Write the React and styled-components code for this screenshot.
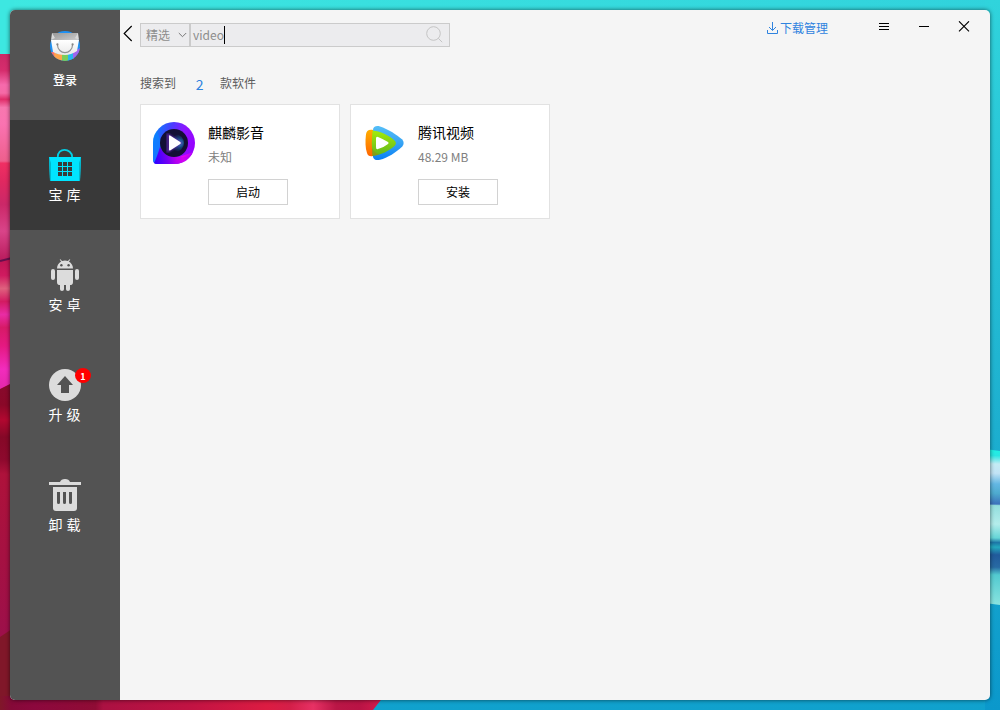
import React from "react";
import styled, { createGlobalStyle } from "styled-components";

const GlobalStyle = createGlobalStyle`
  * { box-sizing: border-box; }
  html, body { margin: 0; padding: 0; }
  body, button, input {
    font-family: "Noto Sans CJK SC", "Noto Sans", sans-serif;
    font-size: 12px;
  }
`;

const Desktop = styled.div`
  position: relative;
  width: 1000px;
  height: 710px;
  padding: 10px;
  overflow: hidden;
`;

const WallpaperSvg = styled.svg`
  position: absolute;
  inset: 0;
  z-index: 0;
`;

const Window = styled.div`
  display: flex;
  width: 980px;
  height: 690px;
  border-radius: 5px;
  overflow: hidden;
  background: #f5f5f5;
`;

const Shade = styled.div`
  position: relative;
  z-index: 1;
  border-radius: 5px;
  box-shadow: 0 0 4px rgba(0, 0, 0, 0.6);
`;

const Sidebar = styled.nav`
  display: flex;
  flex-direction: column;
  width: 110px;
  background: #535353;
`;

const NavItem = styled.div`
  display: flex;
  flex-direction: column;
  align-items: center;
  height: 110px;
  padding-top: ${(p) => (p.$account ? 20 : 28)}px;
  color: #fff;
  background: ${(p) => (p.$active ? "#393939" : "transparent")};
`;

const IconBox = styled.div`
  position: relative;
  display: flex;
  height: 34px;
  svg { display: block; }
`;

const NavLabel = styled.span`
  margin-top: ${(p) => (p.$account ? 6 : 2)}px;
  padding-right: ${(p) => (p.$account ? 0 : 1)}px;
  font-size: ${(p) => (p.$account ? 12 : 14)}px;
  font-weight: ${(p) => (p.$account ? 500 : 400)};
  line-height: 20px;
  white-space: pre;
  word-spacing: ${(p) => (p.$account ? 0 : 0.9)}px;
`;

const Badge = styled.span`
  position: absolute;
  left: 26px;
  top: 0;
  width: 16px;
  height: 15px;
  border-radius: 50%;
  background: #f00;
  color: #fff;
  font-size: 9px;
  font-weight: 700;
  line-height: 17px;
  text-align: center;
`;

const Main = styled.main`
  flex: 1;
  display: flex;
  flex-direction: column;
`;

const TopBar = styled.header`
  display: flex;
  align-items: flex-start;
  height: 53px;
`;

const IconButton = styled.button`
  display: flex;
  align-items: center;
  justify-content: center;
  width: ${(p) => p.$width}px;
  height: ${(p) => p.$height}px;
  margin: 0;
  padding: 0;
  border: 0;
  background: none;
`;

const BackButton = styled(IconButton)`
  justify-content: flex-start;
  padding-left: 3px;
  margin-top: 13px;
`;

const SearchBar = styled.div`
  display: flex;
  width: 310px;
  height: 24px;
  margin-top: 13px;
  border: 1px solid #cbcbcb;
  background: #ececee;
  color: #8c8c8c;
`;

const Category = styled.div`
  display: flex;
  align-items: center;
  justify-content: space-between;
  width: 49px;
  padding: 0 2px 0 5px;
  border-right: 1px solid #cbcbcb;
  line-height: 22px;
`;

const SearchField = styled.div`
  display: flex;
  align-items: center;
  flex: 1;
  padding: 0 6px 0 2px;
  border-left: 1px solid #cbcbcb;
  line-height: 22px;
  svg { margin: 0 0 1px auto; }
`;

const Caret = styled.span`
  width: 1px;
  height: 18px;
  background: #000;
`;

const WindowActions = styled.div`
  display: flex;
  margin-left: auto;
  padding-right: 6px;
`;

const DownloadLink = styled.a`
  display: flex;
  align-items: center;
  gap: 2px;
  height: 20px;
  margin: 8px 36px 0 0;
  color: #2f83df;
  line-height: 20px;
`;

const Results = styled.section`
  display: flex;
  flex-direction: column;
  padding: 0 20px;
`;

const Summary = styled.div`
  display: flex;
  align-items: flex-start;
  height: 41px;
  padding-top: 10px;
  color: #5c5c5c;
  line-height: 20px;
`;

const Count = styled.span`
  width: 44px;
  padding: 1px 0 0 3px;
  color: #2f83df;
  font-size: 14px;
  text-align: center;
`;

const CardGrid = styled.div`
  display: grid;
  grid-template-columns: repeat(4, 200px);
  gap: 10px;
`;

const Card = styled.article`
  display: flex;
  height: 115px;
  border: 1px solid #e2e2e2;
  background: #fff;
  padding: 17px 0 0 12px;
`;

const CardInfo = styled.div`
  display: flex;
  flex-direction: column;
  align-items: flex-start;
  margin-left: 13px;
`;

const AppName = styled.span`
  font-size: 14px;
  line-height: 20px;
  color: #000;
`;

const AppSize = styled.span`
  margin-top: 5px;
  line-height: 20px;
  color: #808080;
`;

const ActionButton = styled.button`
  width: 80px;
  height: 26px;
  margin-top: 12px;
  padding: 0;
  border: 1px solid #d2d2d2;
  background: #fff;
  color: #000;
  line-height: 24px;
`;

function Wallpaper() {
  return (
    <WallpaperSvg width="1000" height="710" viewBox="0 0 1000 710">
      <defs>
        <linearGradient id="sea" x1="0" y1="0" x2="0" y2="1">
          <stop offset="0" stopColor="#3be8e1" />
          <stop offset="0.6" stopColor="#1fb2cd" />
          <stop offset="1" stopColor="#10a1cd" />
        </linearGradient>
        <linearGradient id="sky" x1="0" y1="0" x2="1" y2="0">
          <stop offset="0" stopColor="#3ee8e1" />
          <stop offset="1" stopColor="#30d2dc" />
        </linearGradient>
        <linearGradient id="eastSea" x1="0" y1="0" x2="0" y2="1">
          <stop offset="0" stopColor="#30d4dc" />
          <stop offset="0.6" stopColor="#1dafcf" />
          <stop offset="1" stopColor="#0b98cb" />
        </linearGradient>
        <linearGradient id="petal" gradientUnits="userSpaceOnUse" x1="0" y1="54" x2="0" y2="260">
          <stop offset="0" stopColor="#ca2866" />
          <stop offset="0.08" stopColor="#d62d6d" />
          <stop offset="0.15" stopColor="#f66aac" />
          <stop offset="0.19" stopColor="#f56aa6" />
          <stop offset="0.22" stopColor="#e02d69" />
          <stop offset="0.26" stopColor="#f777af" />
          <stop offset="0.34" stopColor="#fa73b1" />
          <stop offset="0.52" stopColor="#ee5f8d" />
          <stop offset="0.53" stopColor="#f02f63" />
          <stop offset="0.62" stopColor="#e02860" />
          <stop offset="0.73" stopColor="#cb2868" />
          <stop offset="0.86" stopColor="#d94489" />
          <stop offset="1" stopColor="#b91c5d" />
        </linearGradient>
        <linearGradient id="bloom" gradientUnits="userSpaceOnUse" x1="0" y1="260" x2="3" y2="390">
          <stop offset="0" stopColor="#c01554" />
          <stop offset="0.12" stopColor="#d01b60" />
          <stop offset="0.22" stopColor="#df617e" />
          <stop offset="0.32" stopColor="#d31b62" />
          <stop offset="0.42" stopColor="#e92ca5" />
          <stop offset="0.52" stopColor="#d71a67" />
          <stop offset="0.66" stopColor="#e51981" />
          <stop offset="0.84" stopColor="#f22cbd" />
          <stop offset="1" stopColor="#e327a9" />
        </linearGradient>
        <linearGradient id="wine" gradientUnits="userSpaceOnUse" x1="0" y1="385" x2="-8" y2="632">
          <stop offset="0" stopColor="#870a2c" />
          <stop offset="0.08" stopColor="#8a0828" />
          <stop offset="0.14" stopColor="#b20830" />
          <stop offset="0.21" stopColor="#850827" />
          <stop offset="0.3" stopColor="#8d092d" />
          <stop offset="0.36" stopColor="#ae123b" />
          <stop offset="0.7" stopColor="#a51142" />
          <stop offset="1" stopColor="#9d104a" />
        </linearGradient>
        <linearGradient id="base" gradientUnits="userSpaceOnUse" x1="0" y1="0" x2="382" y2="0">
          <stop offset="0" stopColor="#801729" />
          <stop offset="0.03" stopColor="#850938" />
          <stop offset="0.09" stopColor="#8c083d" />
          <stop offset="0.25" stopColor="#900c35" />
          <stop offset="0.27" stopColor="#ab1142" />
          <stop offset="0.5" stopColor="#c21343" />
          <stop offset="0.7" stopColor="#dc1c42" />
          <stop offset="0.76" stopColor="#d41f49" />
          <stop offset="0.82" stopColor="#e73164" />
          <stop offset="0.88" stopColor="#ba1646" />
          <stop offset="0.94" stopColor="#b91345" />
          <stop offset="1" stopColor="#d41c4d" />
        </linearGradient>
        <linearGradient id="shell" gradientUnits="userSpaceOnUse" x1="990" y1="450" x2="987" y2="604">
          <stop offset="0" stopColor="#20f0e4" />
          <stop offset="0.035" stopColor="#29e7e3" />
          <stop offset="0.09" stopColor="#c4ebf4" />
          <stop offset="0.15" stopColor="#c2e3f5" />
          <stop offset="0.22" stopColor="#63b7e3" />
          <stop offset="0.28" stopColor="#4eabcf" />
          <stop offset="0.35" stopColor="#3d72bc" />
          <stop offset="0.36" stopColor="#93dedd" />
          <stop offset="0.48" stopColor="#b4edeb" />
          <stop offset="0.57" stopColor="#65d5d7" />
          <stop offset="0.6" stopColor="#1d76a6" />
          <stop offset="0.63" stopColor="#23a8be" />
          <stop offset="0.68" stopColor="#215a9b" />
          <stop offset="0.76" stopColor="#286aa3" />
          <stop offset="0.81" stopColor="#52cad0" />
          <stop offset="1" stopColor="#88e3df" />
        </linearGradient>
      </defs>
      <rect width="1000" height="710" fill="url(#sea)" />
      <rect width="1000" height="14" fill="url(#sky)" />
      <rect width="14" height="60" fill="#3de7e1" />
      <rect x="985" width="15" height="710" fill="url(#eastSea)" />
      <path d="M0 54H14V265H0Z" fill="url(#petal)" />
      <path d="M0 261L12 258V390H0Z" fill="url(#bloom)" />
      <path d="M0 261L12 258" stroke="#64104d" strokeWidth="2" />
      <path d="M0 389L12 383V640H0Z" fill="url(#wine)" />
      <path d="M0 637L12 629V700H0Z" fill="#801729" />
      <path d="M0 696H384L373 710H0Z" fill="url(#base)" />
      <path d="M985 449L1000 451V605L985 603Z" fill="url(#shell)" />
    </WallpaperSvg>
  );
}

function StoreLogo() {
  return (
    <svg width="30" height="34" viewBox="0 0 30 34">
      <defs>
        <clipPath id="disc"><circle cx="15" cy="16" r="15" /></clipPath>
        <linearGradient id="flap" x1="0" y1="0" x2="1" y2="1">
          <stop offset="0" stopColor="#989898" />
          <stop offset="1" stopColor="#cfcfcf" />
        </linearGradient>
        <linearGradient id="paper" x1="0" y1="0" x2="0" y2="1">
          <stop offset="0" stopColor="#fff" />
          <stop offset="1" stopColor="#e9e9e9" />
        </linearGradient>
      </defs>
      <circle cx="15" cy="16" r="15" fill="#1e91f4" />
      <g clipPath="url(#disc)">
        <path d="M0 22H6V32H0Z" fill="#fa6b6b" />
        <path d="M4 23L12 24V32H5Z" fill="#ffa54c" />
        <rect x="12" y="24" width="6" height="8" fill="#7ccd59" />
        <path d="M18 24L24 23V32H18Z" fill="#28b7ee" />
        <path d="M23 22L30 18V32H23Z" fill="#a064ed" />
      </g>
      <path d="M2 3H28V11H2Z" fill="url(#flap)" />
      <path d="M2 3L5 8L1 10ZM28 3L25 8L29 10Z" fill="#d9d9d9" />
      <path d="M1 10H29L27 21Q21 25 15 25Q8 25 3 22Z" fill="url(#paper)" />
      <path d="M7.4 14.5C7.7 25.2 22.3 25.2 22.6 14.5" fill="none" stroke="#929292" strokeWidth="1.2" />
      <circle cx="7.4" cy="14.4" r="1.1" fill="#858585" />
      <circle cx="22.6" cy="14.4" r="1.1" fill="#858585" />
    </svg>
  );
}

function BagIcon() {
  return (
    <svg width="32" height="34" viewBox="0 0 32 34">
      <path d="M8.8 10V8.7C8.8 4.6 11.8 1.8 15.5 1.8S23.1 4.6 23.1 8.7V10" fill="none" stroke="#00cfe5" strokeWidth="1.8" />
      <path d="M0 9H32L31 33H1Z" fill="#00e4ff" />
      <path d="M0 9L2 15V33H1ZM32 9L30 15V33H31Z" fill="#00b8ce" />
      <path d="M9 14h4v4H9zM14 14h4v4h-4zM19 14h4v4h-4zM9 19h4v4H9zM14 19h4v4h-4zM19 19h4v4h-4zM9 24h4v4H9zM14 24h4v4h-4zM19 24h4v4h-4z" fill="#393939" />
    </svg>
  );
}

function AndroidIcon() {
  return (
    <svg width="28" height="34" viewBox="0 0 28 34" fill="#dcdcdc">
      <path d="M6 10.5C6 7.3 7.8 4.8 10.2 3.5L8.7 1.7L9.5 1.3L11 3.1Q14 2.1 17 3.1L18.5 1.3L19.3 1.7L17.8 3.5C20.4 5 22 7.5 22 10.5Z" />
      <path d="M6 12H22V24.3Q22 27 20.3 27H19V31.2Q19 33 17 33T15 31.2V27H13V31.2Q13 33 11 33T9 31.2V27H7.7Q6 27 6 24.3Z" />
      <rect y="11" width="4" height="11" rx="2" />
      <rect x="24" y="11" width="4" height="11" rx="2" />
      <circle cx="10.4" cy="7.2" r="1.2" fill="#535353" />
      <circle cx="17.6" cy="7.2" r="1.2" fill="#535353" />
    </svg>
  );
}

function UpgradeIcon() {
  return (
    <svg width="32" height="34" viewBox="0 0 32 34">
      <circle cx="16" cy="17" r="16" fill="#dcdcdc" />
      <path d="M16 8L24 17H20V25H12V17H8Z" fill="#535353" />
    </svg>
  );
}

function TrashIcon() {
  return (
    <svg width="32" height="34" viewBox="0 0 32 34" fill="#dcdcdc">
      <path d="M0 4H11Q12 1 16 1T21 4H32V7H0Z" />
      <path d="M4 9H28V30Q28 33 25 33H7Q4 33 4 30Z" />
      <path d="M8 14H11V24.5Q11 26 9.5 26T8 24.5ZM14 14H17V24.5Q17 26 15.5 26T14 24.5ZM20 14H23V24.5Q23 26 21.5 26T20 24.5Z" fill="#535353" />
    </svg>
  );
}

function KylinVideoLogo() {
  return (
    <svg width="42" height="42" viewBox="0 0 42 42">
      <defs>
        <linearGradient id="kRing" x1="0" y1="0.3" x2="1" y2="0.6">
          <stop offset="0" stopColor="#087fff" />
          <stop offset="0.35" stopColor="#493dff" />
          <stop offset="0.65" stopColor="#8b16ff" />
          <stop offset="1" stopColor="#9800ff" />
        </linearGradient>
        <linearGradient id="kTail" x1="0" y1="0.4" x2="1" y2="0.3">
          <stop offset="0" stopColor="#3400ff" />
          <stop offset="0.3" stopColor="#7200f4" />
          <stop offset="0.7" stopColor="#eb00ee" />
          <stop offset="1" stopColor="#b000ff" />
        </linearGradient>
        <radialGradient id="kGlow" cx="0.75" cy="0.5" r="0.5">
          <stop offset="0" stopColor="#2ba8db" />
          <stop offset="0.5" stopColor="#16447b" />
          <stop offset="1" stopColor="#140f35" />
        </radialGradient>
        <filter id="kSoft"><feGaussianBlur stdDeviation="1.1" /></filter>
      </defs>
      <path d="M21 0A21 21 0 0 1 21 42H4Q0 42 0 38V21A21 21 0 0 1 21 0Z" fill="url(#kRing)" />
      <path d="M0 21Q0 13 4 9L9 22Q5 33 1.5 40.5Q0 39.5 0 38Z" fill="#0a84ff" opacity=".7" />
      <path d="M7 25Q4 35 1 41Q2 42 4 42H21C30 42 37 37 40 30L26 35Q13 35 7 25Z" fill="url(#kTail)" />
      <path d="M26 35C33 36 37 34 40 30C37 37 31 42 23 42Z" fill="#a800f7" opacity=".35" />
      <circle cx="21" cy="21" r="14" fill="#140f35" />
      <circle cx="22" cy="21" r="9" fill="url(#kGlow)" />
      <path d="M15 13L28 21L15 29Z" fill="none" stroke="#5c2aa6" strokeWidth="2.5" filter="url(#kSoft)" />
      <path d="M16 14.5Q16 12.7 17.5 13.7L27.2 19.9Q28.7 21 27.2 22L17.5 28.3Q16 29.2 16 27.5Z" fill="#fff" />
    </svg>
  );
}

function TencentVideoLogo() {
  return (
    <svg width="42" height="42" viewBox="0 0 42 42">
      <defs>
        <linearGradient id="tBlue" x1="0" y1="0" x2="0" y2="1">
          <stop offset="0" stopColor="#55bef7" />
          <stop offset="0.5" stopColor="#36a3f4" />
          <stop offset="1" stopColor="#087ff5" />
        </linearGradient>
        <linearGradient id="tOrange" x1="0" y1="0" x2="0" y2="1">
          <stop offset="0" stopColor="#ffae00" />
          <stop offset="1" stopColor="#ff6500" />
        </linearGradient>
        <linearGradient id="tGreen" x1="0" y1="0" x2="0" y2="1">
          <stop offset="0" stopColor="#a4ec0a" />
          <stop offset="1" stopColor="#61b51c" />
        </linearGradient>
      </defs>
      <path d="M10 8C10 5 13 3.2 17 4.4C25 6.9 33.5 12.5 39.3 17.5Q42 21 39.3 24.5C33 30.5 24.5 35.8 17 37.8Q11 39 10 35Z" fill="url(#tBlue)" />
      <path d="M10 8C5.5 7.3 3.2 9 2.9 13C2.2 19 2.3 26 4 31Q5.2 35 10 34Z" fill="url(#tOrange)" />
      <path d="M9.5 8.4C17 9 26 13 31.5 18.5Q34.3 21 31.5 24C25 29.5 18 33 9.5 34Q8 21 9.5 8.4Z" fill="url(#tGreen)" />
      <path d="M9 26Q8.3 30 9.5 34Q13 33.5 16 32.5Q11 30 9 26Z" fill="#ae7415" opacity=".38" />
      <path d="M13 16.5Q13 14 15 15Q20 17 25 20Q26.3 21 25 22Q20 26 15 27Q13 28 13 25Z" fill="#fff" />
    </svg>
  );
}

const navItems = [
  { label: "登录", icon: <StoreLogo />, account: true },
  { label: "宝 库", icon: <BagIcon />, active: true },
  { label: "安 卓", icon: <AndroidIcon /> },
  { label: "升 级", icon: <UpgradeIcon />, badge: 1 },
  { label: "卸 载", icon: <TrashIcon /> },
];

const apps = [
  { name: "麒麟影音", size: "未知", action: "启动", logo: <KylinVideoLogo /> },
  { name: "腾讯视频", size: "48.29 MB", action: "安装", logo: <TencentVideoLogo /> },
];

export default function App() {
  return (
    <Desktop>
      <GlobalStyle />
      <Wallpaper />
      <Shade>
        <Window>
          <Sidebar>
            {navItems.map((n) => (
              <NavItem key={n.label} $active={n.active} $account={n.account}>
                <IconBox>
                  {n.icon}
                  {n.badge && <Badge>{n.badge}</Badge>}
                </IconBox>
                <NavLabel $account={n.account}>{n.label}</NavLabel>
              </NavItem>
            ))}
          </Sidebar>
          <Main>
            <TopBar>
              <BackButton $width={20} $height={21} aria-label="返回">
                <svg width="10" height="17" viewBox="0 0 10 17" fill="none" stroke="#000" strokeWidth="1.2">
                  <path d="M8.7 1L1.2 8.5L8.7 16" />
                </svg>
              </BackButton>
              <SearchBar>
                <Category>
                  精选
                  <svg width="9" height="6" viewBox="0 0 9 6" fill="none" stroke="#777" strokeWidth="1">
                    <path d="M.8 1L4.5 4.7L8.2 1" />
                  </svg>
                </Category>
                <SearchField>
                  <span>video</span>
                  <Caret />
                  <svg width="17" height="17" viewBox="0 0 17 17" fill="none" stroke="#c4c4c4" strokeWidth="1">
                    <circle cx="7.5" cy="7.5" r="6.8" />
                    <path d="M12.3 12.3L16.2 16.2" />
                  </svg>
                </SearchField>
              </SearchBar>
              <WindowActions>
                <DownloadLink>
                  <svg width="11" height="12" viewBox="0 0 11 12" fill="none" stroke="#2f83df" strokeWidth="1">
                    <path d="M.5 8V11.5H10.5V8M5.5 0V8.3M2 5L5.5 8.5L9 5" />
                  </svg>
                  下载管理
                </DownloadLink>
                <IconButton $width={40} $height={33} aria-label="菜单">
                  <svg width="10" height="9" viewBox="0 0 10 9" stroke="#000">
                    <path d="M0 1.5H10M0 4.5H10M0 7.5H10" />
                  </svg>
                </IconButton>
                <IconButton $width={40} $height={33} aria-label="最小化">
                  <svg width="10" height="1" viewBox="0 0 10 1" stroke="#000"><path d="M0 .5H10" /></svg>
                </IconButton>
                <IconButton $width={40} $height={33} aria-label="关闭">
                  <svg width="12" height="11" viewBox="0 0 12 11" stroke="#000" strokeWidth="1.1">
                    <path d="M1 .3L11 10.3M11 .3L1 10.3" />
                  </svg>
                </IconButton>
              </WindowActions>
            </TopBar>
            <Results>
              <Summary>
                <span>搜索到</span>
                <Count>2</Count>
                <span>款软件</span>
              </Summary>
              <CardGrid>
                {apps.map((a) => (
                  <Card key={a.name}>
                    {a.logo}
                    <CardInfo>
                      <AppName>{a.name}</AppName>
                      <AppSize>{a.size}</AppSize>
                      <ActionButton>{a.action}</ActionButton>
                    </CardInfo>
                  </Card>
                ))}
              </CardGrid>
            </Results>
          </Main>
        </Window>
      </Shade>
    </Desktop>
  );
}
